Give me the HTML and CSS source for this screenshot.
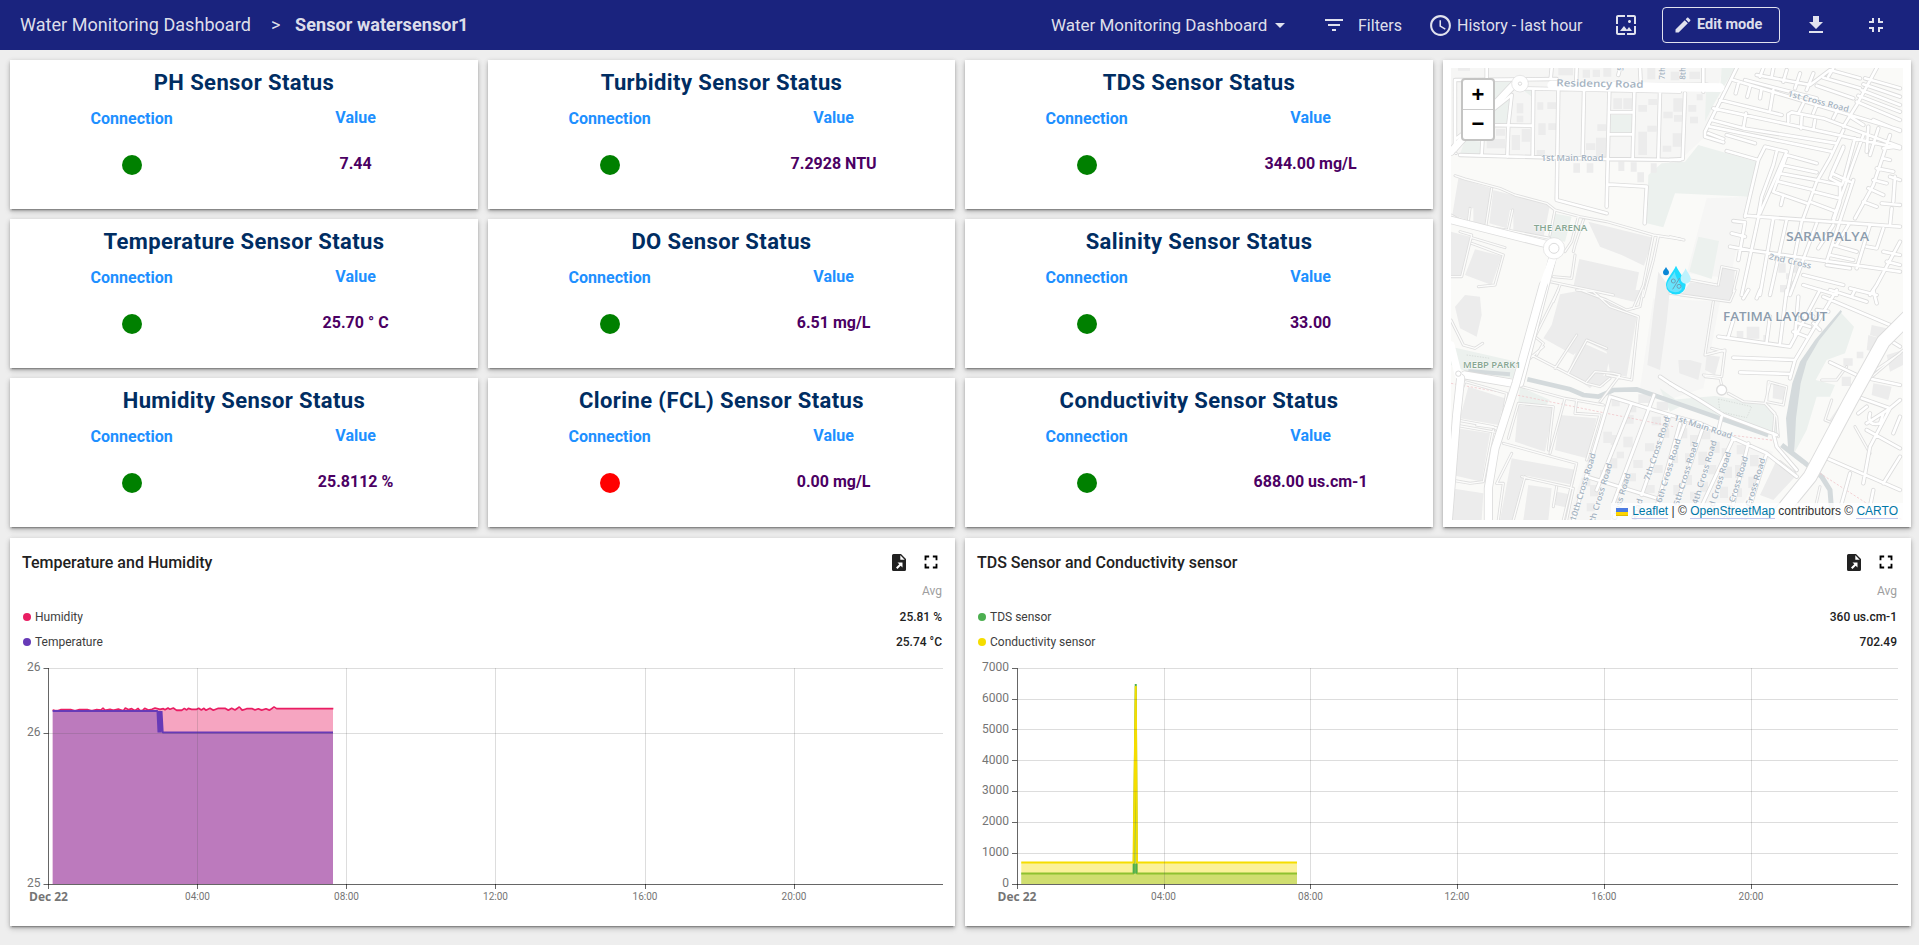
FILE: index.html
```html
<!DOCTYPE html>
<html lang="en">
<head>
<meta charset="utf-8">
<title>Water Monitoring Dashboard</title>
<link rel="stylesheet" href="styles.css">
</head>
<body>
<header class="topbar">
  <nav class="crumbs"><span class="crumb-root">Water Monitoring Dashboard</span><span class="crumb-sep">&gt;</span><span class="crumb-current">Sensor watersensor1</span></nav>
  <div class="tools">
    <div class="state-select"><span>Water Monitoring Dashboard</span><i class="caret"></i></div>
    <div class="filters"><svg class="icon" viewBox="0 0 24 24"><path d="M10 18h4v-2h-4v2zM3 6v2h18V6H3zm3 7h12v-2H6v2z"/></svg><span>Filters</span></div>
    <div class="history"><svg class="icon icon-clock" viewBox="0 0 24 24"><path d="M11.99 2C6.47 2 2 6.48 2 12s4.47 10 9.99 10C17.52 22 22 17.52 22 12S17.52 2 11.99 2zM12 20c-4.42 0-8-3.58-8-8s3.58-8 8-8 8 3.58 8 8-3.58 8-8 8zm.5-13H11v6l5.25 3.15.75-1.23-4.5-2.67z"/></svg><span>History - last hour</span></div>
    <svg class="icon icon-image" viewBox="0 0 24 24"><path d="M4 4h7V2H4c-1.1 0-2 .9-2 2v7h2V4zm6 9l-4 5h12l-3-4-2.03 2.71L10 13zm7-4.5c0-.83-.67-1.5-1.5-1.5S14 7.67 14 8.5s.67 1.5 1.5 1.5S17 9.33 17 8.5zM20 2h-7v2h7v7h2V4c0-1.1-.9-2-2-2zm0 18h-7v2h7c1.1 0 2-.9 2-2v-7h-2v7zM4 13H2v7c0 1.1.9 2 2 2h7v-2H4v-7z"/></svg>
    <button class="edit"><svg class="icon icon-pen" viewBox="0 0 24 24"><path d="M3 17.25V21h3.75L17.81 9.94l-3.75-3.75L3 17.25zM20.71 7.04c.39-.39.39-1.02 0-1.41l-2.34-2.34c-.39-.39-1.02-.39-1.41 0l-1.83 1.83 3.75 3.75 1.83-1.83z"/></svg><span>Edit mode</span></button>
    <svg class="icon icon-download" viewBox="0 0 24 24"><path d="M19 9h-4V3H9v6H5l7 7 7-7zM5 18v2h14v-2H5z"/></svg>
    <svg class="icon icon-exit" viewBox="0 0 24 24"><path d="M5 16h3v3h2v-5H5v2zm3-8H5v2h5V5H8v3zm6 11h2v-3h3v-2h-5v5zm2-11V5h-2v5h5V8h-3z"/></svg>
  </div>
</header>
<main class="board">
  <section class="card status"><h2>PH Sensor Status</h2><div class="pair"><div class="conn"><b>Connection</b><i class="dot"></i></div><div class="val"><b>Value</b><span>7.44</span></div></div></section>
  <section class="card status"><h2>Turbidity Sensor Status</h2><div class="pair"><div class="conn"><b>Connection</b><i class="dot"></i></div><div class="val"><b>Value</b><span>7.2928 NTU</span></div></div></section>
  <section class="card status"><h2>TDS Sensor Status</h2><div class="pair"><div class="conn"><b>Connection</b><i class="dot"></i></div><div class="val"><b>Value</b><span>344.00 mg/L</span></div></div></section>
  <section class="card map-card"><div class="map">
    <svg class="tiles" viewBox="33 39 1356 1356">
      <defs>
        <g id="service">
          <path d="M45 362L75 372 180 400 225 420 320 445 345 465 330 540M155 400L138 510M33 480L90 510 200 525 330 550M90 460L85 500M218 465L205 525M60 530L95 540 65 665 33 665M95 565L190 600 165 690 115 695M95 548L195 578M345 465L420 485 500 500 640 540 720 552M415 485L395 560 375 590M430 495L405 570 400 590M640 540L610 690 580 760M655 545L640 615 610 725M405 600L395 670 340 665M330 680L520 720M360 690L340 740"/>
          <g transform="translate(0 705)">
            <path d="M33 90L70 165 105 175 128 160M355 0L285 140 310 160 290 195M265 190L440 280 480 290 510 265M410 0L460 5 510 50 595 80 575 270 500 255M420 0L500 30 560 60 600 50 610 0M270 205L310 170M345 235L410 135M385 250L440 150 500 175M440 275L465 245 520 250 540 255 480 335M75 275L65 300 50 390 160 410 180 425 200 310 75 275M245 290L375 325 490 345M375 325L330 490M410 330L405 370 480 375 440 510M205 445L235 340 340 350 325 480M45 405L185 430M33 570L90 580 130 575 160 420M190 460L410 520 370 690M215 490L170 580 190 580 175 690M245 560L400 595 380 690M255 560L220 690M350 590L340 650M110 405L180 415"/>
          </g>
          <g transform="translate(690 0)"><path d="M0 545L42 555M145 690L155 635 205 645 190 710M60 675L140 690"/></g>
          <g transform="translate(690 705)"><path d="M0 10L180 35 195 0M130 35L105 195 165 180 155 260 100 255M105 260L150 265 155 285M125 175L165 185M175 310L220 335 285 340 320 380 325 440M295 275L350 290 340 345 290 335 295 275M300 280L285 340 315 370 310 430M530 230L500 270 455 270M485 330L465 390 490 400M600 265L700 180M610 245L690 190M555 410L600 490M330 515L375 550M450 590L430 680"/></g>
        </g>
        <g id="minor">
          <path d="M45 75L350 72M45 75L45 290M140 39V72M335 39L332 72M410 39L408 95M600 39L602 80M535 60L540 39M245 100L720 110M215 120L205 210M280 105L278 300M130 210L278 212M130 210L125 300M205 215L202 305M60 300L500 312 720 315M355 105L350 435 500 475M432 105L428 300M508 110L500 455M583 112L578 312M660 112L655 310M510 172H578M510 238H578M505 388L620 395 614 505M215 120L50 250"/>
          <g transform="translate(690 0)">
            <path d="M100 39V110M45 115L38 312 0 315M200 39L105 230 105 245 160 262M190 75L690 225M150 135L335 180M310 105L300 165M130 160L690 280M225 75L320 100 440 130M205 85L197 115M240 95L232 125M275 100L270 130M125 195L220 220 228 175M120 215L485 290M220 220L500 265M170 240L255 265M115 235L160 252M170 288L265 315 285 275 350 290 270 475M265 315L225 485M320 290L310 330 275 425 265 480M355 178L365 172 460 190 540 220 690 275M355 178L355 200M395 185L393 220M435 195L430 225M350 300L310 410 410 445M350 300L440 325M335 330L440 352M330 355L440 375M325 380L430 405M520 225L480 310 440 380 400 490M340 420L333 450M520 280L480 370 510 385 510 440 490 500M580 240L490 490M550 375L470 620M610 195L690 228M620 39L560 150 520 215M585 70L690 100M580 88L690 125M575 106L690 150M565 122L690 170M560 140L690 195M280 39L270 65M310 39L305 65M350 45L340 80M390 55L375 100M430 55L410 105M260 60L420 90 480 45 570 70M440 92L550 130M460 68L570 100M490 39L475 65M400 145L385 175M440 150L430 175M505 160L490 190M540 185L580 210M595 215L590 290M625 220L600 300M660 240L610 390 555 490M640 280L680 275M640 310L660 315M620 340L670 350M610 375L650 385M595 400L640 420M580 440L620 455M520 275L485 355 540 380M555 250L520 380 515 390M660 365L690 375M675 365L670 440M635 445L690 450M665 460L660 510M420 440L500 470M440 375L510 390M430 410L510 430M225 482L690 515M190 498L225 502 205 615M185 535L225 545M180 575L235 585 690 650M265 490L215 720M310 490L270 720M350 495L300 720M395 500L350 720M440 505L360 720M490 510L445 580M535 510L500 570M600 510L560 640M490 570L560 590M480 600L550 615M470 630L540 640M640 520L620 580 590 575M690 560L620 690 600 720M640 590L690 600M650 620L690 630M400 660L520 690M400 690L500 720M540 700L620 720"/>
          </g>
          <g transform="translate(0 705)"><path d="M660 260L720 300M510 320L690 375M510 320L400 690M575 340L470 600M642 315L520 640M690 375L605 615M440 560L650 625M720 400L650 650"/></g>
          <g transform="translate(690 705)">
            <path d="M0 280L80 325 160 375 320 435M155 380L145 420M0 375L90 400 190 445 290 490 380 560M45 400L0 520M100 410L20 640M190 445L80 680M235 460L180 680M290 490L230 680M235 0L220 25M270 0L260 25M190 90L175 140M145 140L360 170 450 0M300 80L290 155M350 0L330 160M385 20L375 140M190 203L375 210 360 265M210 247L360 252M375 210L500 0M390 75L430 80M385 100L420 110M370 125L410 140M430 100L450 120M440 60L475 65M460 20L660 105 690 115M480 0L590 35M555 0L545 20M610 0L620 40M480 217L570 260 690 285M575 325L660 355 690 330M660 355L590 400M565 370L590 350M600 370Q590 410 630 400L640 370M590 420L690 475M660 355L600 470 580 580M670 430L690 380M460 500L690 600M540 550L515 640M610 600L600 650M640 580L690 500M690 170L650 145M310 430L320 470 380 540"/>
          </g>
        </g>
        <g id="major">
          <path d="M345 90L720 95 800 95M33 290L60 260 225 85M33 495L330 570M340 600L240 985"/>
        </g>
      </defs>
      <rect x="33" y="39" width="1356" height="1356" fill="#fafaf8"/>
      <path class="block" d="M33 39H850L790 250 720 315 33 300ZM800 430L925 425 870 670 740 655ZM640 730L840 740 790 1000 700 1030 600 1000ZM510 1020L1000 1190 880 1395 380 1395Z"/>
      <g class="park">
        <path d="M160 80H215L150 150ZM165 150L210 130V205H165ZM512 180H575V235H512ZM245 102H275V125ZM75 255L120 260V298H60ZM625 360L665 325 735 320 775 270 955 322 925 425 705 415 670 517 620 505ZM340 475L395 485 375 560 325 550ZM775 545L837 558 815 672 748 650ZM845 39H885L860 80 820 150 795 200 798 110H840Z"/>
        <path d="M33 875L230 920 220 970 80 950 33 930ZM240 995L330 1035 315 1055 235 1040ZM1200 770L1242 815 1215 895 1160 915 1127 975 1185 990 1170 1025 1130 1025 1100 1125 1065 1190 1060 985 1090 915ZM825 1023L990 1050 1020 1145 690 1035ZM660 1000L730 1050 690 1070Z"/>
      </g>
      <g class="building">
        <path d="M55 370L155 400 135 510 100 500V460H85L82 495 37 480ZM160 405L330 450 310 550 220 525V465H210L200 520 148 505ZM33 530L90 545 65 665 33 665ZM105 583L185 603 155 690 75 660ZM445 500L640 548 612 632 545 600 480 575ZM418 612L597 652 580 740 400 695Z"/>
        <path d="M45 755L75 720 120 725 125 780 110 845 60 820ZM360 718L430 705 510 745 590 785 560 965 510 955 500 890 440 860 400 900 310 850 335 810ZM530 705H600L590 740 540 730ZM420 860L510 900 500 950 450 1000 385 950ZM455 955L510 965 490 995 450 985ZM85 995L195 1030 175 1110 60 1090ZM50 1120L150 1135 125 1280 37 1260ZM235 1050L340 1060 315 1190 225 1160ZM360 1080L470 1090 440 1210 345 1185ZM215 1210L410 1245 400 1290 250 1260 220 1395H180ZM265 1290L335 1300 325 1395H250ZM350 1310L400 1320 390 1360 345 1350ZM33 1300L130 1315 125 1395H33ZM655 650L690 700 680 800 660 945 622 930 640 770Z"/>
        <path d="M750 682L840 690 845 640 885 645 875 740 720 725ZM715 915L750 915 785 925 775 975 718 955ZM800 900L840 905 825 960 795 945ZM1000 985L1035 990 1030 1035 998 1030ZM1295 810L1340 820 1325 850 1290 840ZM1300 985L1355 995 1345 1035 1295 1020ZM1285 840L1320 850 1300 890 1280 885ZM1200 1050L1225 1010 1215 1085 1165 1100ZM1010 1215L1065 1265 1000 1335 960 1320ZM1340 900L1389 885V930L1350 950Z"/>
        <path d="M230 145h20v30h-20zM230 182h20v20h-20zM292 142h18v22h-18zM322 142h26v20h-26zM295 205h22v35h-22zM325 205h24v20h-24zM168 222h28v20h-28zM140 252h55v28h-55zM215 240h25v45h-25zM245 222h26v38h-26zM290 285h25v18h-25zM520 130h26v32h-26zM550 130h26v32h-26zM472 208h26v20h-26zM468 248h30v60h-30zM438 265h28v20h-28zM595 150h26v20h-26zM625 132h26v18h-26zM622 212h28v18h-28zM595 230h26v70h-26zM670 170h28v20h-28zM700 130h28v40h-28zM698 235h28v40h-28zM668 272h26v18h-26zM702 180h26v20h-26zM400 325h20v28h-20zM440 325h20v28h-20zM535 320h18v28h-18zM572 322h18v28h-18zM592 352h20v30h-20zM632 325h18v28h-18zM54 39h36v8h-36zM355 39h44v22h-44zM428 44h22v24h-22zM458 44h22v22h-22zM490 39h24v26h-24zM622 39h24v34h-24zM692 50h26v26h-26zM748 50h32v22h-32zM808 88h26v22h-26zM745 150h24v20h-24zM750 185h24v20h-24zM770 118h18v18h-18z"/>
        <path d="M1015 625h22v28h-22zM1055 625h28v28h-28zM1038 655h12v18h-12zM1020 690h18v22h-18zM1052 678h14v20h-14zM920 815h38v36h-38zM890 828h20v22h-20zM970 840h10v20h-10zM1210 910h28v22h-28zM1250 890h20v20h-20zM1205 965h28v28h-28z"/>
        <path d="M515 1030h24v24h-24zM565 1050h24v22h-24zM595 1018h36v26h-36zM650 1040h34v26h-34zM490 1130h26v34h-26zM512 1140h22v30h-22zM555 1080h26v26h-26zM550 1145h28v32h-28zM530 1190h22v20h-22zM510 1210h22v30h-22zM480 1245h26v24h-26zM425 1270h26v24h-26zM450 1290h24v34h-24zM580 1215h28v24h-28zM615 1165h28v24h-28zM635 1085h28v26h-28zM660 1120h28v28h-28zM560 1255h28v24h-28zM610 1290h34v24h-34zM540 1280h24v26h-24zM640 1230h28v24h-28zM690 1190h24v34h-24zM720 1120h22v30h-22zM750 1140h24v34h-24zM735 1195h26v30h-26zM785 1125h26v28h-26zM775 1190h26v40h-26zM815 1160h24v34h-24zM805 1230h24v28h-24zM845 1180h24v28h-24zM850 1235h26v34h-26zM890 1170h26v28h-26zM885 1230h26v38h-26zM930 1200h26v34h-26zM925 1265h24v34h-24zM730 1260h26v30h-26zM780 1280h24v30h-24zM840 1295h24v34h-24zM880 1300h26v26h-26zM700 1290h26v30h-26zM750 1310h24v24h-24zM440 1345h24v24h-24zM520 1330h26v24h-26z"/>
      </g>
      <g class="water">
        <path d="M262 973L390 1003 430 1020 475 1025 520 1005 590 1003 640 1020 720 1048 840 1090 985 1140" stroke-width="14"/>
        <path d="M85 948L210 958" stroke-width="12"/>
        <path d="M1025 1170L1090 1220 1145 1265 1170 1305 1177 1395" stroke-width="15"/>
        <path d="M1202 765L1125 855 1080 920 1057 985 1038 1090 1045 1190 1063 1190 1068 1090 1082 985 1100 920 1138 855 1206 770Z" fill="#d4dadc"/>
      </g>
      <path class="trail" d="M33 985L240 1022 500 1075 700 1115M870 1140L1000 1156M1140 1255L1280 1345M1280 1345L1389 1395"/>
      <path class="path" d="M835 1032L935 1055 920 1088 840 1070ZM80 900L150 910"/>
      <use href="#service" class="case-s"/><use href="#service" class="fill-s"/>
      <use href="#minor" class="case-m"/><use href="#major" class="case-l"/>
      <use href="#minor" class="fill-m"/><use href="#major" class="fill-l"/>
      <path class="case-r" d="M75 960L220 985"/><path class="fill-r" d="M75 960L220 985"/>
      <path class="case-r" d="M310 690L228 985 165 1180 145 1300 145 1410"/><path class="fill-r" d="M345 590L310 690 228 985 165 1180 145 1300 145 1410"/>
      <path class="case-h" d="M1000 1400L1110 1265 1230 1040 1330 860 1410 780"/><path class="fill-h" d="M1000 1400L1110 1265 1230 1040 1330 860 1410 780"/>
      <path class="case-r" d="M25 1395L50 1080 62 970"/><path class="fill-r" d="M25 1395L50 1080 62 970M33 870L55 960"/>
      <path class="fill-xl" d="M335 90L840 98"/>
      <g class="rounds"><circle cx="240" cy="86" r="25"/><circle cx="342" cy="580" r="32"/><circle class="ring" cx="342" cy="580" r="15"/><circle class="ring" cx="240" cy="86" r="5"/><circle class="ring" cx="48" cy="295" r="4"/><circle class="ring" cx="55" cy="956" r="8"/><circle class="ring thick" cx="845" cy="1005" r="15"/></g>
      <g class="labels">
        <text x="349" y="94" textLength="261" lengthAdjust="spacingAndGlyphs" transform="rotate(1 349 94)" class="l-road big">Residency Road</text>
        <text x="303" y="318" textLength="187" lengthAdjust="spacingAndGlyphs" class="l-road">1st Main Road</text>
        <text x="281" y="527" textLength="161" lengthAdjust="spacingAndGlyphs" class="l-park">THE ARENA</text>
        <text x="69" y="939" textLength="173" lengthAdjust="spacingAndGlyphs" class="l-park">MEBP PARK1</text>
        <text x="1038" y="557" textLength="249" lengthAdjust="spacingAndGlyphs" class="l-area">SARAIPALYA</text>
        <text x="849" y="797" textLength="313" lengthAdjust="spacingAndGlyphs" class="l-area">FATIMA LAYOUT</text>
        <text textLength="188" lengthAdjust="spacingAndGlyphs" transform="translate(1042 124) rotate(14.5)" class="l-road">1st Cross Road</text>
        <text textLength="130" lengthAdjust="spacingAndGlyphs" transform="translate(985 612) rotate(13)" class="l-road">2nd Cross</text>
        <text textLength="182" lengthAdjust="spacingAndGlyphs" transform="translate(700 1095) rotate(18)" class="l-road">1st Main Road</text>
        <text textLength="38" lengthAdjust="spacingAndGlyphs" transform="translate(674 74) rotate(-88)" class="l-road">7th</text>
        <text textLength="38" lengthAdjust="spacingAndGlyphs" transform="translate(736 74) rotate(-88)" class="l-road">8th</text>
        <text textLength="36" lengthAdjust="spacingAndGlyphs" transform="translate(550 48) rotate(-88)" class="l-road">5th</text>
        <text textLength="200" lengthAdjust="spacingAndGlyphs" transform="translate(628 1278) rotate(-72)" class="l-road">7th Cross Road</text>
        <text textLength="212" lengthAdjust="spacingAndGlyphs" transform="translate(406 1400) rotate(-73)" class="l-road">10th Cross Road</text>
        <text textLength="200" lengthAdjust="spacingAndGlyphs" transform="translate(459 1418) rotate(-73)" class="l-road">9th Cross Road</text>
        <text textLength="200" lengthAdjust="spacingAndGlyphs" transform="translate(514 1448) rotate(-73)" class="l-road">8th Cross Road</text>
        <text textLength="200" lengthAdjust="spacingAndGlyphs" transform="translate(664 1345) rotate(-73)" class="l-road">6th Cross Road</text>
        <text textLength="200" lengthAdjust="spacingAndGlyphs" transform="translate(716 1354) rotate(-73)" class="l-road">5th Cross Road</text>
        <text textLength="200" lengthAdjust="spacingAndGlyphs" transform="translate(772 1350) rotate(-73)" class="l-road">4th Cross Road</text>
        <text textLength="200" lengthAdjust="spacingAndGlyphs" transform="translate(815 1384) rotate(-73)" class="l-road">3rd Cross Road</text>
        <text textLength="200" lengthAdjust="spacingAndGlyphs" transform="translate(866 1398) rotate(-73)" class="l-road">2nd Cross Road</text>
        <text textLength="200" lengthAdjust="spacingAndGlyphs" transform="translate(918 1403) rotate(-73)" class="l-road">1st Cross Road</text>
        <text textLength="200" lengthAdjust="spacingAndGlyphs" transform="translate(550 1525) rotate(-73)" class="l-road">7th Cross Road</text>
      </g>
      <g class="marker">
        <path fill="#1fdcff" d="M708 632C698 654 678 672 678 690A29 28 0 0 0 737 690C737 672 718 654 708 632Z"/>
        <path fill="#66e4fd" d="M704 650C696 666 681 678 681 692A25 23 0 0 0 724 704C730 690 708 675 704 650Z"/>
        <path fill="#bdf2fd" d="M737 640C731 655 722 661 722 671A15 15 0 0 0 752 671C752 661 743 655 737 640Z"/>
        <path fill="#0b87d6" d="M678 636C674 644 669 646 669 652A9 9 0 0 0 687 652C687 646 682 644 678 636Z"/>
        <g fill="none" stroke="#6d9db4" stroke-width="3"><path d="M719 669L698 703"/><circle cx="700" cy="678" r="6"/><circle cx="717" cy="694" r="6"/></g>
      </g>
    </svg>
    <div class="zoomer"><span>+</span><span>−</span></div>
    <div class="credit"><svg class="flag" viewBox="0 0 12 8"><path fill="#4c7be1" d="M0 0h12v4H0z"/><path fill="#ffd500" d="M0 4h12v3H0z"/><path fill="#e0bc00" d="M0 7h12v1H0z"/></svg><span><a>Leaflet</a> | © <a>OpenStreetMap</a> contributors © <a>CARTO</a></span></div>
  </div></section>
  <section class="card status"><h2>Temperature Sensor Status</h2><div class="pair"><div class="conn"><b>Connection</b><i class="dot"></i></div><div class="val"><b>Value</b><span>25.70 ° C</span></div></div></section>
  <section class="card status"><h2>DO Sensor Status</h2><div class="pair"><div class="conn"><b>Connection</b><i class="dot"></i></div><div class="val"><b>Value</b><span>6.51 mg/L</span></div></div></section>
  <section class="card status"><h2>Salinity Sensor Status</h2><div class="pair"><div class="conn"><b>Connection</b><i class="dot"></i></div><div class="val"><b>Value</b><span>33.00</span></div></div></section>
  <section class="card status"><h2>Humidity Sensor Status</h2><div class="pair"><div class="conn"><b>Connection</b><i class="dot"></i></div><div class="val"><b>Value</b><span>25.8112 %</span></div></div></section>
  <section class="card status"><h2>Clorine (FCL) Sensor Status</h2><div class="pair"><div class="conn"><b>Connection</b><i class="dot off"></i></div><div class="val"><b>Value</b><span>0.00 mg/L</span></div></div></section>
  <section class="card status"><h2>Conductivity Sensor Status</h2><div class="pair"><div class="conn"><b>Connection</b><i class="dot"></i></div><div class="val"><b>Value</b><span>688.00 us.cm-1</span></div></div></section>
</main>
<div class="charts">
  <section class="card chart">
    <div class="chart-head"><h3>Temperature and Humidity</h3><svg class="icon-file" viewBox="0 0 14 17"><path fill="#212121" fill-rule="evenodd" d="M2 0H9L14 5V15.5A1.5 1.5 0 0 1 12.500 17H1.500A1.500 1.500 0 0 1 0 15.500V1.500A1.500 1.500 0 0 1 1.500 0ZM8.300 1.300V5.700H12.700ZM5.500 8.500H10.500V13.500L8.700 11.700 5.500 15 4 13.500 7.300 10.300Z"/></svg><svg class="icon-full" viewBox="0 0 24 24"><path d="M7 14H5v5h5v-2H7v-3zm-2-4h2V7h3V5H5v5zm12 7h-3v2h5v-5h-2v3zM14 5v2h3v3h2V5h-5z"/></svg></div>
    <div class="legend">
      <div class="avg">Avg</div>
      <div class="row"><i class="key red"></i><span>Humidity</span><b>25.81 %</b></div>
      <div class="row"><i class="key purple"></i><span>Temperature</span><b>25.74 °C</b></div>
    </div>
    <svg class="plot">
      <path class="fill-hum" d="M42.700 49.500L323 48.500V224H42.700Z"/>
      <g transform="translate(-10 -130) scale(.33333)"><path class="line red-line" d="M158 540L170 544 182 539H212L225 543 238 539 262 539 275 543 290 539 303 540 309 534 315 541 330 538 340 541 355 537 370 543 376 534 386 539 395 536 405 542 414 535 420 543 428 542 434 535 445 540 456 538 465 534 480 538 490 536 495 539 504 534 510 538 520 534 530 541 545 541 553 535 560 540 565 535 575 538 590 538 596 535 604 540 612 535 618 541 630 535 640 541 655 535 675 535 685 541 695 535 705 540 718 531 727 541 740 536 757 536 765 540 775 536 785 541 798 536 808 541 822 531 830 536 1000 536"/></g>
      <path class="fill-temp" d="M42.700 51H148L149 72.500 151.500 51 153 72.500H323V224H42.700Z"/>
      <path class="line purple-line" d="M42.700 51H147.500L148.500 72.500 149.500 51 150.500 72.500 151.500 51 152.700 72.500H323"/>
      <path class="grid" d="M38.500 8.500H933M38.500 73.500H933M187.500 8V224M336.500 8V224M485.500 8V224M635.500 8V224M784.500 8V224"/>
      <path class="axis" d="M38.500 8V229M33.500 224.500H933M33.500 8.500H38.500M33.500 73.500H38.500M187.500 224V229M336.500 224V229M485.500 224V229M635.500 224V229M784.500 224V229"/>
      <g class="ylab"><text x="30.500" y="11">26</text><text x="30.500" y="76">26</text><text x="30.500" y="227">25</text></g>
      <g class="xlab"><text class="day" x="38.500" y="241">Dec 22</text><text x="187.500" y="240">04:00</text><text x="336.500" y="240">08:00</text><text x="485.500" y="240">12:00</text><text x="635" y="240">16:00</text><text x="784" y="240">20:00</text></g>
    </svg>
  </section>
  <section class="card chart">
    <div class="chart-head"><h3>TDS Sensor and Conductivity sensor</h3><svg class="icon-file" viewBox="0 0 14 17"><path fill="#212121" fill-rule="evenodd" d="M2 0H9L14 5V15.500A1.500 1.500 0 0 1 12.500 17H1.500A1.500 1.500 0 0 1 0 15.500V1.500A1.500 1.500 0 0 1 1.500 0ZM8.300 1.300V5.700H12.700ZM5.500 8.500H10.500V13.500L8.700 11.700 5.500 15 4 13.500 7.300 10.300Z"/></svg><svg class="icon-full" viewBox="0 0 24 24"><path d="M7 14H5v5h5v-2H7v-3zm-2-4h2V7h3V5H5v5zm12 7h-3v2h5v-5h-2v3zM14 5v2h3v3h2V5h-5z"/></svg></div>
    <div class="legend">
      <div class="avg">Avg</div>
      <div class="row"><i class="key green"></i><span>TDS sensor</span><b>360 us.cm-1</b></div>
      <div class="row"><i class="key yellow"></i><span>Conductivity sensor</span><b>702.49</b></div>
    </div>
    <svg class="plot">
      <path class="fill-tds" d="M56.250 213.500H168.250L170.500 24 171.750 213.500H332V224H56.250Z"/>
      <path class="line green-line" d="M56.250 213.500H168.750L170.750 24 171.750 213.500H332"/>
      <path class="fill-cond" d="M56.250 202.500H168.250L170.500 26 172 202.500H332V224H56.250Z"/>
      <path class="line yellow-line" d="M56.250 202.500H168.500L170.750 26 172 202.500H332"/>
      <path class="line green-line" d="M168.750 204V213.500M171.250 204V213.500"/>
      <path class="grid" d="M52 8.500H933M52 39.500H933M52 69.500H933M52 100.500H933M52 131.500H933M52 162.500H933M52 193.500H933M199.500 8V224M345.500 8V224M492.500 8V224M639.500 8V224M786.500 8V224"/>
      <path class="axis" d="M52.500 8V229M47 224.500H933M47 8.500H52M47 39.500H52M47 69.500H52M47 100.500H52M47 131.500H52M47 162.500H52M47 193.500H52M199.500 224V229M345.500 224V229M492.500 224V229M639.500 224V229M786.500 224V229"/>
      <g class="ylab"><text x="44" y="11">7000</text><text x="44" y="42">6000</text><text x="44" y="73">5000</text><text x="44" y="104">4000</text><text x="44" y="134">3000</text><text x="44" y="165">2000</text><text x="44" y="196">1000</text><text x="44" y="227">0</text></g>
      <g class="xlab"><text class="day" x="52" y="241">Dec 22</text><text x="198.500" y="240">04:00</text><text x="345.500" y="240">08:00</text><text x="492" y="240">12:00</text><text x="639" y="240">16:00</text><text x="786" y="240">20:00</text></g>
    </svg>
  </section>
</div>
</body>
</html>
```
FILE: styles.css
```css
* { box-sizing: border-box; }
body { margin: 0; height: 945px; overflow: hidden; background: #eee; font-family: Roboto, "Liberation Sans", sans-serif; }
h2, h3 { margin: 0; font-weight: 500; }

.topbar { height: 50px; background: #1a237e; color: rgba(255,255,255,.87); display: flex; justify-content: space-between; align-items: center; padding: 0 31px 0 20px; white-space: nowrap; }
.crumbs { display: flex; font-size: 18px; line-height: 24px; }
.crumb-root { width: 251px; letter-spacing: .04px; }
.crumb-sep { width: 24px; }
.crumb-current { font-weight: 700; letter-spacing: .08px; }
.tools { display: flex; align-items: center; height: 50px; font-size: 16px; }
.icon { width: 24px; height: 24px; fill: currentColor; flex: none; }
.state-select { width: 271px; display: flex; align-items: center; font-size: 17px; }
.state-select span { letter-spacing: -.03px; }
.caret { margin-left: 8px; border: 5px solid transparent; border-top-color: currentColor; border-bottom: 0; }
.filters { width: 106px; display: flex; align-items: center; gap: 12px; }
.history { width: 186px; display: flex; align-items: center; gap: 4px; }
.icon-clock { width: 25px; height: 25px; }
.edit { margin: 0 24px; height: 36px; width: 118px; padding: 0 0 2px 10px; display: flex; align-items: center; gap: 4px; background: none; border: 1px solid currentColor; border-radius: 4px; color: inherit; font: 700 14.500px Roboto, sans-serif; }
.icon-pen { width: 20px; height: 20px; }
.edit .icon-pen { margin-top: 2px; }
.icon-exit { margin-left: 36px; }

.board { display: grid; grid-template-columns: 468px 467px 468px 468px; grid-template-rows: repeat(3, 149.170px); gap: 10px; padding: 10px 0 0 10px; }
.card { background: #fff; box-shadow: 0 3px 1px -2px rgba(0,0,0,.2), 0 2px 2px 0 rgba(0,0,0,.14), 0 1px 5px 0 rgba(0,0,0,.12), 0 3px 6px rgba(0,0,0,.15); }
.map-card { grid-column: 4; grid-row: 1 / 4; padding: 8px; }
.status { text-align: center; padding-top: 9px; }
.status h2 { color: #002d62; font-size: 22px; font-weight: 700; line-height: 28px; letter-spacing: .4px; }
.pair { display: grid; grid-template-columns: 224px 224px; padding-left: 9.600px; font-size: 16px; }
.pair b { display: block; font-weight: 700; color: #1e90ff; line-height: 20px; }
.conn { padding-top: 12px; }
.val { padding-top: 11px; }
.dot { display: block; width: 20px; height: 20px; border-radius: 50%; background: green; margin: 26px auto 0; }
.off { background: red; }
.val span { display: block; margin-top: 26px; line-height: 20px; font-weight: 700; color: #4b0063; }

.map { position: relative; height: 452px; overflow: hidden; }
.tiles { display: block; width: 100%; height: 452px; }
.block { fill: #f6f6f5; }
.park { fill: #ecf1ee; }
.building { fill: #ececec; }
.water { fill: none; stroke: #d4dadc; }
.water path[fill] { stroke: none; }
.trail { fill: none; stroke: #f0c9cd; stroke-width: 2.500; stroke-dasharray: 7 5; }
.path { fill: none; stroke: #d9dedb; stroke-width: 3; stroke-dasharray: 4 4; }
.tiles use, .case-r, .fill-r, .case-h, .fill-h, .fill-xl { fill: none; stroke-linecap: round; stroke-linejoin: round; }
.case-s { stroke: #dedede; stroke-width: 9; }
.fill-s { stroke: #fcfcfb; stroke-width: 4; }
.case-m { stroke: #dcdcdc; stroke-width: 13; }
.fill-m { stroke: #fff; stroke-width: 8; }
.case-l { stroke: #dcdcdc; stroke-width: 25; }
.fill-l { stroke: #fff; stroke-width: 20; }
.case-r { stroke: #dcdcdc; stroke-width: 27; }
.fill-r { stroke: #fff; stroke-width: 22; }
.case-h { stroke: #dcdcdc; stroke-width: 45; }
.fill-h { stroke: #fff; stroke-width: 39; }
.fill-xl { stroke: #fff; stroke-width: 26; }
.rounds circle { fill: #fff; stroke: #dcdcdc; stroke-width: 2; }
.rounds .ring { stroke-width: 3; }
.rounds .thick { stroke-width: 4; }
.labels text { font-family: "Open Sans", "Noto Sans", sans-serif; font-weight: 600; paint-order: stroke; stroke: rgba(255,255,255,.7); stroke-width: 3px; }
.l-road { fill: #a5b3c1; font-size: 25px; }
.labels .big { font-size: 30px; }
.l-park { fill: #86a692; font-size: 26px; }
.l-area { fill: #8c9cad; font-size: 37px; }
.zoomer { position: absolute; left: 10px; top: 10px; width: 34px; border: 2px solid #c4c4c3; border-radius: 4px; background: #fff; overflow: hidden; }
.zoomer span { display: block; height: 29px; text-align: center; font: bold 22px/30px "Liberation Sans", sans-serif; color: #000; }
.zoomer span + span { height: 30px; border-top: 1px solid #ccc; line-height: 28px; }
.credit { position: absolute; right: 0; bottom: 0; height: 17px; padding: 0 5px; display: flex; align-items: center; gap: 4px; background: rgba(255,255,255,.8); color: #333; font: 12px/17px "Liberation Sans", sans-serif; white-space: nowrap; }
.credit a { color: #0078a8; box-shadow: 0 1px #c4c8ee; }
.flag { width: 12px; height: 8px; }

.charts { display: grid; grid-template-columns: 945px 946px; gap: 10px; padding: 10.490px 0 0 10px; }
.chart { height: 388px; padding: 12px 13px 0 12px; }
.chart-head { display: flex; align-items: center; height: 25px; }
.chart h3 { font-size: 16px; color: #212121; margin-right: auto; }
.icon-file { width: 14px; height: 17px; margin-right: 14px; }
.icon-full { width: 22px; height: 22px; }
.chart + .chart { padding-right: 14px; }
.legend { font-size: 12px; color: #3d3d3d; height: 85px; }
.avg { height: 30px; line-height: 33px; text-align: right; color: #9e9e9e; }
.row { display: flex; align-items: center; height: 25px; line-height: 25px; padding-left: 1px; }
.row span { margin: 0 auto 0 4px; }
.row b { font-weight: 500; color: #212121; }
.key { width: 8px; height: 8px; border-radius: 50%; }
.red { background: #e91e63; }
.purple { background: #673ab7; }
.green { background: #4caf50; }
.yellow { background: #f5dd00; }
.plot { display: block; width: 945px; height: 265px; margin-left: -12px; }
.line { fill: none; stroke-width: 2; stroke-linejoin: bevel; }
.red-line { stroke: #e91e63; stroke-width: 5; }
.purple-line { stroke: #673ab7; }
.green-line { stroke: #4caf50; }
.yellow-line { stroke: #f5dd00; }
.fill-hum { fill: #e91e63; opacity: .4; }
.fill-temp { fill: #673ab7; opacity: .4; }
.fill-tds { fill: #4caf50; opacity: .4; }
.fill-cond { fill: #f5dd00; opacity: .4; }
.grid { fill: none; stroke: rgba(84,84,84,.2); }
.axis { fill: none; stroke: rgba(0,0,0,.6); }
.ylab { font-size: 12px; fill: #757575; text-anchor: end; }
.xlab { font-size: 10px; fill: #757575; text-anchor: middle; }
.xlab .day { font: bold 12px "Open Sans", "Noto Sans", sans-serif; }
```
